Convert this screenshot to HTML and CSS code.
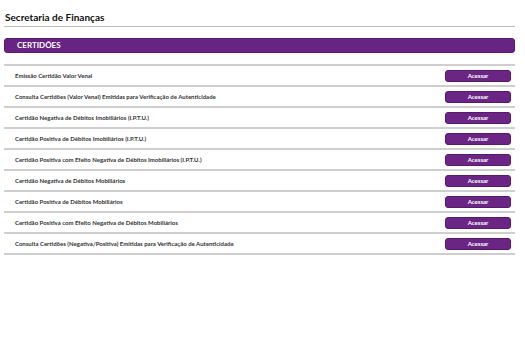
FILE: index.html
```html
<!DOCTYPE html>
<html lang="pt-BR">
    <head>
        <meta charset="UTF-8" />
        <meta name="viewport" content="width=device-width, initial-scale=1.0" />
        <title>Secretaria de Finanças</title>
        <link rel="stylesheet" href="styles.css">
    </head>
    <body>
        <div id="page">
            <h1 id="title">Secretaria de Finanças</h1>
            <div class="section-bar">CERTIDÕES</div>
            <ul class="list">
                <li class="item"><span>Emissão Certidão Valor Venal</span><button class="btn">Acessar</button></li>
                <li class="item"><span>Consulta Certidões (Valor Venal) Emitidas para Verificação de Autenticidade</span><button class="btn">Acessar</button></li>
                <li class="item"><span>Certidão Negativa de Débitos Imobiliários (I.P.T.U.)</span><button class="btn">Acessar</button></li>
                <li class="item"><span>Certidão Positiva de Débitos Imobiliários (I.P.T.U.)</span><button class="btn">Acessar</button></li>
                <li class="item"><span>Certidão Positiva com Efeito Negativa de Débitos Imobiliários (I.P.T.U.)</span><button class="btn">Acessar</button></li>
                <li class="item"><span>Certidão Negativa de Débitos Mobiliários</span><button class="btn">Acessar</button></li>
                <li class="item"><span>Certidão Positiva de Débitos Mobiliários</span><button class="btn">Acessar</button></li>
                <li class="item"><span>Certidão Positiva com Efeito Negativa de Débitos Mobiliários</span><button class="btn">Acessar</button></li>
                <li class="item"><span>Consulta Certidões (Negativa/Positiva) Emitidas para Verificação de Autenticidade</span><button class="btn">Acessar</button></li>
            </ul>
        </div>
    </body>
</html>
```

FILE: styles.css
```css
body {
    margin: 0;
    background: #fff;
    font-family: Lato, "Liberation Sans", sans-serif;
    color: #222;
}
#page {
    padding: 0 10px 0 4px;
}
#title {
    margin: 0;
    padding: 11px 0 2px 1px;
    font-size: 10px;
    font-weight: 700;
    line-height: 13px;
    color: #111;
    border-bottom: 1px solid #bdbdbd;
}
.section-bar {
    margin-top: 11px;
    height: 15px;
    line-height: 13px;
    padding-left: 12px;
    background: #682483;
    border: 1px solid #5a1a72;
    border-radius: 3px;
    color: #fff;
    font-size: 8px;
    font-weight: 700;
    box-sizing: border-box;
}
.list {
    list-style: none;
    margin: 11px 0 0;
    padding: 0;
    border-bottom: 2px solid #cfcfcf;
}
.item {
    display: flex;
    align-items: center;
    justify-content: space-between;
    height: 19px;
    padding: 0 4px 0 11px;
    border-top: 2px solid #cfcfcf;
    font-size: 6px;
    font-weight: 700;
    color: #333;
}
.btn {
    width: 66px;
    height: 12px;
    padding: 0;
    background: #6a2585;
    border: 1px solid #571b6e;
    border-radius: 3px;
    color: #fff;
    font-family: Lato, "Liberation Sans", sans-serif;
    font-size: 6px;
    font-weight: 700;
    cursor: pointer;
}
```
